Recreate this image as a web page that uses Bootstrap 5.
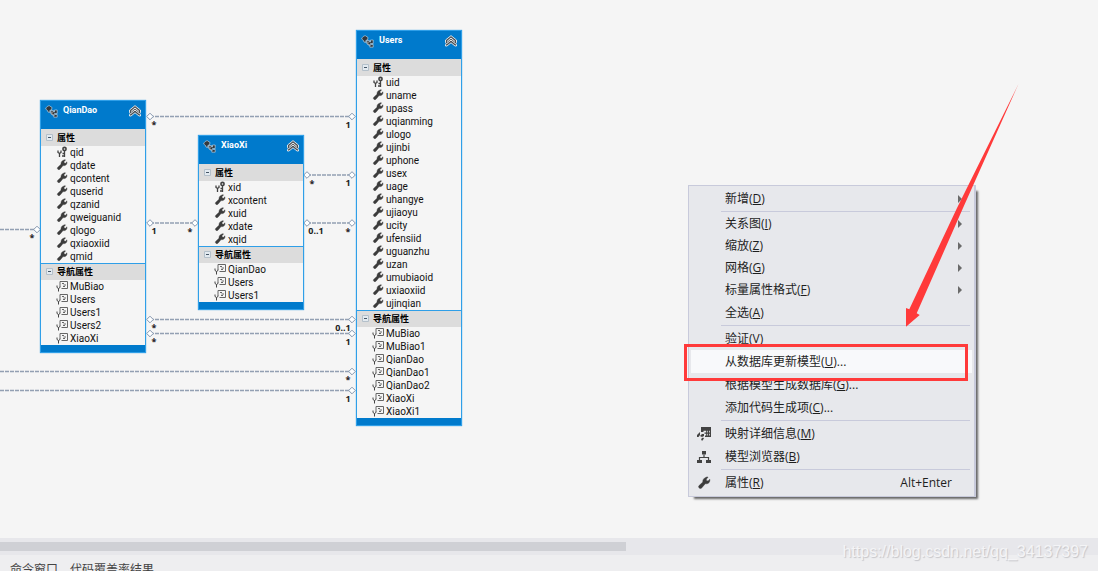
<!DOCTYPE html>
<html lang="zh-CN">
<head>
<meta charset="utf-8">
<meta name="viewport" content="width=device-width, initial-scale=1">
<title>Entity Model Designer</title>
<link href="https://cdn.jsdelivr.net/npm/bootstrap@5.3.0/dist/css/bootstrap.min.css" rel="stylesheet">
<style>
body{font-family:"Open Sans","Noto Sans CJK SC",sans-serif;font-size:12px;line-height:16px;color:#1e1e1e;background:#f5f5f5}
.btn{color:inherit;font-size:12px;line-height:16px}
.links{position:absolute;left:0;top:0;width:480px;height:440px}
.links path{stroke:#93a0b3;stroke-width:1.5;stroke-dasharray:4 1;fill:none}
.links text{font-size:9px;font-weight:700;fill:#222;text-anchor:middle}
.entity{position:absolute;width:106px;border:1px solid #2f9fe8;box-shadow:0 0 1px #2f9fe8;background:#f5f5f5;font-family:Roboto,"Noto Sans CJK SC",sans-serif;font-size:10px;line-height:13px;color:#111}
.entity-head{height:28px;background:#007acc;color:#fff;padding:4px 4px 0 4px}
.entity-head h2{font-size:9px;line-height:10px;font-weight:700;margin:0 0 0 5px}
.sect{height:17px;background:#dcdcdc;border-top:1px solid #2f9fe8;font-size:9px;line-height:16px;font-weight:700;color:#000;padding-left:5px}
.sect span{margin-left:3px}
.first{border-top-color:#dcdcdc}
.fields li{height:13px;padding-left:15px;white-space:nowrap}
.fields svg{width:12px;height:12px;margin-right:2px}
.entity-foot{height:7px;background:#007acc}
.ctx{position:absolute;left:688px;top:185px;width:288px;padding:2px;background:#e7e8ec;border:1px solid #c8cadb;border-right-width:2px;box-shadow:4px 4px 2px -2px #666}
.ctx .btn{height:22px;padding:0 20px 0 6px}
.ctx .tall{height:23px}
.ctx .pic{width:28px}
.ctx .pic svg{width:14px;height:14px}
.ctx hr{margin:1px 2px 1px 30px;border:0;height:1px;background:#c8cadb;opacity:1}
.ctx .hot{background:#f8f9fb}
.tri{border:4px solid transparent;border-left:4px solid #6a6a6a;border-right:0;margin-right:-10px}
.frame{position:absolute;inset:-6px 4px -8px -7px;border:3px solid #ff3a3a;z-index:2;pointer-events:none}
.pointer{position:absolute;left:900px;top:80px;width:124px;height:250px;z-index:3;pointer-events:none}
.track{height:17px;background:#e7e7eb;padding:4px 0}
.thumb{width:57%;background:#cfd0d5}
.tabs{height:16px;background:#eeeef0;padding:7px 10px 0;gap:12px;color:#444}
.wm{position:absolute;right:10px;bottom:10px;font:16px/18px "Liberation Sans",sans-serif;color:#f4f4f6;text-shadow:1px 1px 1px #c4c4c8}
</style>
<script src="https://cdn.jsdelivr.net/npm/bootstrap@5.3.0/dist/js/bootstrap.bundle.min.js"></script>
</head>
<body class="vh-100 d-flex flex-column overflow-hidden position-relative">
<svg width="0" height="0" class="position-absolute" aria-hidden="true">
 <symbol id="wrench" viewBox="0 0 12 12"><path fill="#3c3c3c" stroke="#3c3c3c" stroke-width=".4" d="M7.500 1.200c1-.5 2-.3 2-.3L8 2.700l.2 1.300 1.300.2L11 2.800c.3 2.200-.9 3.900-3 3.900-.6 0-.9-.1-.9-.1L4 10.200c-1.200 1.200-3.400-.2-2.400-1.800L5 5.200C4.700 3.300 6 1.700 7.500 1.200z"/></symbol>
 <symbol id="key" viewBox="0 0 12 12"><g fill="none" stroke="#424242"><circle cx="8.500" cy="3" r="1.600" stroke-width="1.600"/><path stroke-width="1.300" d="M8.500 4.500v6.500M8.500 7.500h-2M8.500 10H6M2 4.500v2l1.500 1 1.500-1v-2M3.500 7v4"/></g></symbol>
 <symbol id="nav" viewBox="0 0 12 12"><g fill="none" stroke="#666"><path d="M4 5.500V1.500h7.500v7H5.500M6 3.500h2M7.500 5h2.500M7 6.500h2"/><path stroke="#444" d="M1 5.500v2l1.500 1L4 7.500v-2M2.500 8.500v3"/></g></symbol>
 <symbol id="ent" viewBox="0 0 13 13"><g stroke="#cfe3f2" stroke-width=".6" fill="#33383d"><path d="M.6 4C1.500 1.500 3 .8 4.500.8L7 2.500 6.500 5 5 5.200 4.500 7.500 3 7 2.500 5.500z"/><path d="M5.500 5.500h3v1.500h1V5h2.700v3.500H9.500v1h2.700v2.700H8.800V10H7L5.500 8z"/></g><path stroke="#fff" stroke-width=".8" d="M7 6.500v2l2 2"/></symbol>
 <symbol id="up" viewBox="0 0 12 12"><path fill="#4c5257" stroke="#fff" stroke-width=".8" d="M6 .6 11.500 5v2.800L10.800 8.600l.7.7v1.700H10L6 7.800 2 11H.5V9.300l.7-.7L.5 7.800V5z"/><path fill="none" stroke="#fff" stroke-width=".9" d="M2 6.500 6 3l4 3.500M1.500 8.800 6 5l4.500 3.800"/></symbol>
 <symbol id="minus" viewBox="0 0 8 8"><path fill="#e3eaf0" stroke="#b4c0ca" d="M.5.5h6v6h-6z"/><path stroke="#456" d="M2 3.500h3"/></symbol>
 <symbol id="dia" viewBox="-4 -4 8 8" overflow="visible"><path style="stroke:#8496ae;stroke-width:1;stroke-dasharray:none;fill:#fff" d="M0-3.300 3.300 0 0 3.300-3.300 0z"/></symbol>
</svg>

<main class="flex-grow-1 position-relative overflow-hidden">
 <svg class="links" viewBox="0 0 480 440">
  <path d="M150 116.500H352M150 223H195M0 229.500H37M307 175H352M307 223H352M150 319.500H352M150 333.500H352M0 371.500H352M0 390.500H352"/>
  <g>
   <use href="#dia" x="146" y="112.500" width="8" height="8"/><use href="#dia" x="348" y="112.500" width="8" height="8"/>
   <use href="#dia" x="146" y="219" width="8" height="8"/><use href="#dia" x="191" y="219" width="8" height="8"/>
   <use href="#dia" x="33" y="225.500" width="8" height="8"/>
   <use href="#dia" x="303" y="171" width="8" height="8"/><use href="#dia" x="348" y="171" width="8" height="8"/>
   <use href="#dia" x="303" y="219" width="8" height="8"/><use href="#dia" x="348" y="219" width="8" height="8"/>
   <use href="#dia" x="146" y="315.500" width="8" height="8"/><use href="#dia" x="348" y="315.500" width="8" height="8"/>
   <use href="#dia" x="146" y="329.500" width="8" height="8"/><use href="#dia" x="348" y="329.500" width="8" height="8"/>
   <use href="#dia" x="348" y="367.500" width="8" height="8"/><use href="#dia" x="348" y="386.500" width="8" height="8"/>
  </g>
  <text x="154" y="128">*</text><text x="348" y="128">1</text>
  <text x="154" y="234">1</text><text x="190" y="235">*</text><text x="32" y="241">*</text>
  <text x="312" y="187">*</text><text x="348" y="186">1</text>
  <text x="316" y="234">0..1</text><text x="348" y="235">*</text>
  <text x="154" y="331">*</text><text x="343" y="331">0..1</text>
  <text x="154" y="345">*</text><text x="348" y="345">1</text>
  <text x="348" y="383">*</text><text x="348" y="402">1</text>
 </svg>

 <section class="entity" style="left:40px;top:100px">
  <div class="entity-head d-flex align-items-start"><svg width="13" height="13"><use href="#ent"/></svg><h2>QianDao</h2><button class="btn p-0 border-0 ms-auto d-flex" aria-label="折叠"><svg width="12" height="12"><use href="#up"/></svg></button></div>
  <div class="sect first d-flex align-items-center"><svg width="8" height="8"><use href="#minus"/></svg><span>属性</span></div>
  <ul class="fields list-unstyled m-0">
   <li class="d-flex"><svg><use href="#key"/></svg>qid</li>
   <li class="d-flex"><svg><use href="#wrench"/></svg>qdate</li>
   <li class="d-flex"><svg><use href="#wrench"/></svg>qcontent</li>
   <li class="d-flex"><svg><use href="#wrench"/></svg>quserid</li>
   <li class="d-flex"><svg><use href="#wrench"/></svg>qzanid</li>
   <li class="d-flex"><svg><use href="#wrench"/></svg>qweiguanid</li>
   <li class="d-flex"><svg><use href="#wrench"/></svg>qlogo</li>
   <li class="d-flex"><svg><use href="#wrench"/></svg>qxiaoxiid</li>
   <li class="d-flex"><svg><use href="#wrench"/></svg>qmid</li>
  </ul>
  <div class="sect d-flex align-items-center"><svg width="8" height="8"><use href="#minus"/></svg><span>导航属性</span></div>
  <ul class="fields list-unstyled m-0">
   <li class="d-flex"><svg><use href="#nav"/></svg>MuBiao</li>
   <li class="d-flex"><svg><use href="#nav"/></svg>Users</li>
   <li class="d-flex"><svg><use href="#nav"/></svg>Users1</li>
   <li class="d-flex"><svg><use href="#nav"/></svg>Users2</li>
   <li class="d-flex"><svg><use href="#nav"/></svg>XiaoXi</li>
  </ul>
  <div class="entity-foot"></div>
 </section>

 <section class="entity" style="left:198px;top:135px">
  <div class="entity-head d-flex align-items-start"><svg width="13" height="13"><use href="#ent"/></svg><h2>XiaoXi</h2><button class="btn p-0 border-0 ms-auto d-flex" aria-label="折叠"><svg width="12" height="12"><use href="#up"/></svg></button></div>
  <div class="sect first d-flex align-items-center"><svg width="8" height="8"><use href="#minus"/></svg><span>属性</span></div>
  <ul class="fields list-unstyled m-0">
   <li class="d-flex"><svg><use href="#key"/></svg>xid</li>
   <li class="d-flex"><svg><use href="#wrench"/></svg>xcontent</li>
   <li class="d-flex"><svg><use href="#wrench"/></svg>xuid</li>
   <li class="d-flex"><svg><use href="#wrench"/></svg>xdate</li>
   <li class="d-flex"><svg><use href="#wrench"/></svg>xqid</li>
  </ul>
  <div class="sect d-flex align-items-center"><svg width="8" height="8"><use href="#minus"/></svg><span>导航属性</span></div>
  <ul class="fields list-unstyled m-0">
   <li class="d-flex"><svg><use href="#nav"/></svg>QianDao</li>
   <li class="d-flex"><svg><use href="#nav"/></svg>Users</li>
   <li class="d-flex"><svg><use href="#nav"/></svg>Users1</li>
  </ul>
  <div class="entity-foot"></div>
 </section>

 <section class="entity" style="left:356px;top:30px">
  <div class="entity-head d-flex align-items-start"><svg width="13" height="13"><use href="#ent"/></svg><h2>Users</h2><button class="btn p-0 border-0 ms-auto d-flex" aria-label="折叠"><svg width="12" height="12"><use href="#up"/></svg></button></div>
  <div class="sect first d-flex align-items-center"><svg width="8" height="8"><use href="#minus"/></svg><span>属性</span></div>
  <ul class="fields list-unstyled m-0">
   <li class="d-flex"><svg><use href="#key"/></svg>uid</li>
   <li class="d-flex"><svg><use href="#wrench"/></svg>uname</li>
   <li class="d-flex"><svg><use href="#wrench"/></svg>upass</li>
   <li class="d-flex"><svg><use href="#wrench"/></svg>uqianming</li>
   <li class="d-flex"><svg><use href="#wrench"/></svg>ulogo</li>
   <li class="d-flex"><svg><use href="#wrench"/></svg>ujinbi</li>
   <li class="d-flex"><svg><use href="#wrench"/></svg>uphone</li>
   <li class="d-flex"><svg><use href="#wrench"/></svg>usex</li>
   <li class="d-flex"><svg><use href="#wrench"/></svg>uage</li>
   <li class="d-flex"><svg><use href="#wrench"/></svg>uhangye</li>
   <li class="d-flex"><svg><use href="#wrench"/></svg>ujiaoyu</li>
   <li class="d-flex"><svg><use href="#wrench"/></svg>ucity</li>
   <li class="d-flex"><svg><use href="#wrench"/></svg>ufensiid</li>
   <li class="d-flex"><svg><use href="#wrench"/></svg>uguanzhu</li>
   <li class="d-flex"><svg><use href="#wrench"/></svg>uzan</li>
   <li class="d-flex"><svg><use href="#wrench"/></svg>umubiaoid</li>
   <li class="d-flex"><svg><use href="#wrench"/></svg>uxiaoxiid</li>
   <li class="d-flex"><svg><use href="#wrench"/></svg>ujinqian</li>
  </ul>
  <div class="sect d-flex align-items-center"><svg width="8" height="8"><use href="#minus"/></svg><span>导航属性</span></div>
  <ul class="fields list-unstyled m-0">
   <li class="d-flex"><svg><use href="#nav"/></svg>MuBiao</li>
   <li class="d-flex"><svg><use href="#nav"/></svg>MuBiao1</li>
   <li class="d-flex"><svg><use href="#nav"/></svg>QianDao</li>
   <li class="d-flex"><svg><use href="#nav"/></svg>QianDao1</li>
   <li class="d-flex"><svg><use href="#nav"/></svg>QianDao2</li>
   <li class="d-flex"><svg><use href="#nav"/></svg>XiaoXi</li>
   <li class="d-flex"><svg><use href="#nav"/></svg>XiaoXi1</li>
  </ul>
  <div class="entity-foot"></div>
 </section>

 <div class="ctx d-flex flex-column" role="menu">
  <button role="menuitem" class="btn border-0 rounded-0 d-flex align-items-center"><span class="pic"></span><span>新增(<u>D</u>)</span><i class="tri ms-auto"></i></button>
  <hr>
  <button role="menuitem" class="btn border-0 rounded-0 d-flex align-items-center"><span class="pic"></span><span>关系图(<u>I</u>)</span><i class="tri ms-auto"></i></button>
  <button role="menuitem" class="btn border-0 rounded-0 d-flex align-items-center"><span class="pic"></span><span>缩放(<u>Z</u>)</span><i class="tri ms-auto"></i></button>
  <button role="menuitem" class="btn border-0 rounded-0 d-flex align-items-center"><span class="pic"></span><span>网格(<u>G</u>)</span><i class="tri ms-auto"></i></button>
  <button role="menuitem" class="btn border-0 rounded-0 d-flex align-items-center"><span class="pic"></span><span>标量属性格式(<u>F</u>)</span><i class="tri ms-auto"></i></button>
  <button role="menuitem" class="btn border-0 rounded-0 d-flex align-items-center tall"><span class="pic"></span><span>全选(<u>A</u>)</span></button>
  <hr>
  <button role="menuitem" class="btn border-0 rounded-0 d-flex align-items-center tall"><span class="pic"></span><span>验证(<u>V</u>)</span></button>
  <button role="menuitem" class="btn border-0 rounded-0 d-flex align-items-center tall hot position-relative"><span class="pic"></span><span>从数据库更新模型(<u>U</u>)...</span><span class="frame"></span></button>
  <button role="menuitem" class="btn border-0 rounded-0 d-flex align-items-center tall"><span class="pic"></span><span>根据模型生成数据库(<u>G</u>)...</span></button>
  <button role="menuitem" class="btn border-0 rounded-0 d-flex align-items-center tall"><span class="pic"></span><span>添加代码生成项(<u>C</u>)...</span></button>
  <hr>
  <button role="menuitem" class="btn border-0 rounded-0 d-flex align-items-center tall"><span class="pic d-flex"><svg viewBox="0 0 14 14"><path fill="#424242" d="M4 0h10v10H8V8.500h1.200V6.800H7.500V5.500h1.700V3.800H6.500V5H4zM10.300 3.800v1.700H11V3.800zM12 3.800v1.700h.8V3.800zM10.300 6.800v1.700H11V6.800zM12 6.800v1.700h.8V6.800zM0 8l3-3v3L1.500 10H0zM3 9l2-2h2v2l-2 1zM4 12l2-1.500 1 1L5 14z"/></svg></span><span>映射详细信息(<u>M</u>)</span></button>
  <button role="menuitem" class="btn border-0 rounded-0 d-flex align-items-center tall"><span class="pic d-flex"><svg viewBox="0 0 14 14"><path fill="#424242" d="M5 1h4v3.500H5zM0 10h5v3H0zM9 10h5v3H9z"/><path fill="none" stroke="#424242" stroke-width="1.200" d="M7 4.500v3M2.500 10V7.500h9V10"/></svg></span><span>模型浏览器(<u>B</u>)</span></button>
  <hr>
  <button role="menuitem" class="btn border-0 rounded-0 d-flex align-items-center tall"><span class="pic d-flex"><svg><use href="#wrench"/></svg></span><span>属性(<u>R</u>)</span><span class="ms-auto">Alt+Enter</span></button>
 </div>

 <svg class="pointer" viewBox="900 80 124 250" aria-hidden="true"><path fill="#ff3a3a" d="M1018.500 84 963 208 916.700 313.300l3 1.700L906 326.700V308l3.300 1.300L957 208z"/></svg>
</main>

<div class="track"><div class="thumb h-100"></div></div>
<footer class="tabs d-flex align-items-start overflow-hidden">
 <button class="btn p-0 border-0">命令窗口</button>
 <button class="btn p-0 border-0">代码覆盖率结果</button>
</footer>
<div class="wm">https://blog.csdn.net/qq_34137397</div>
</body>
</html>
